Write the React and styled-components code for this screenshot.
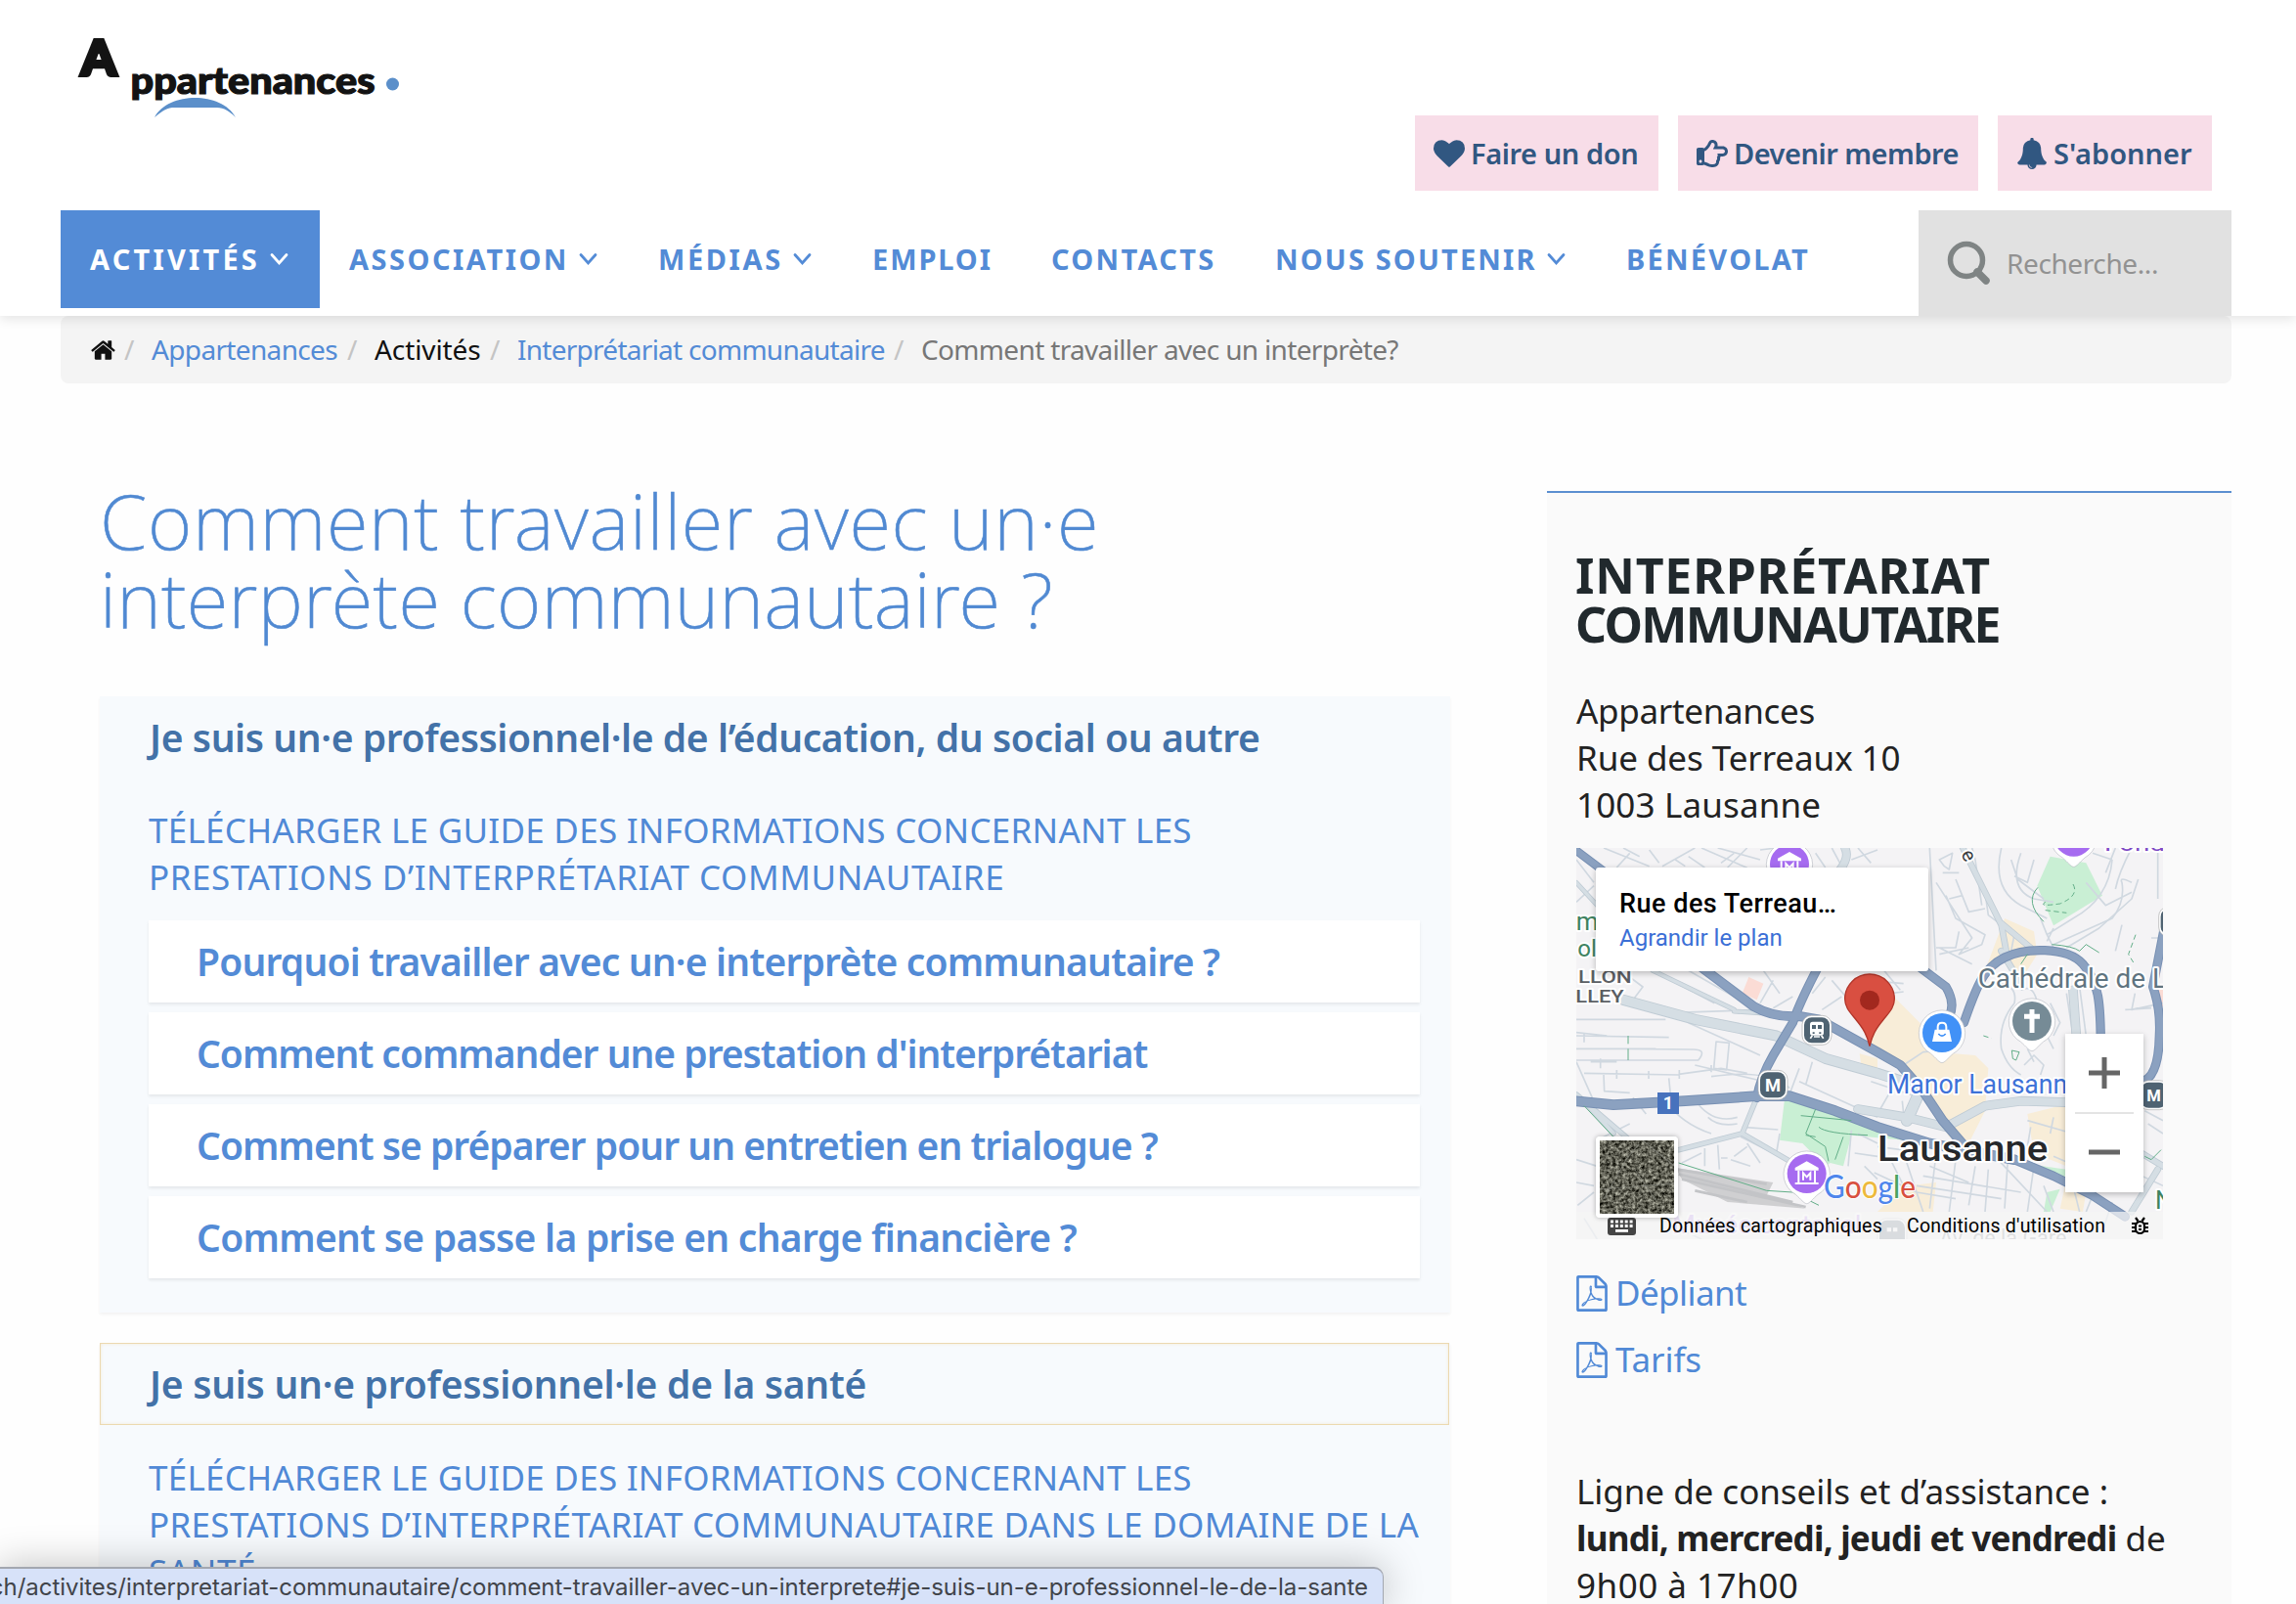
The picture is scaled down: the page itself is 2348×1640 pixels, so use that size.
import React from 'react';
import styled, { createGlobalStyle, css } from 'styled-components';
import { FaRegHandPointRight } from 'react-icons/fa';

const sans = '"Noto Sans", "Open Sans", sans-serif';
const blue = '#538bd6';

const GlobalStyle = createGlobalStyle`
  * { box-sizing: border-box; }
  body { margin: 0; background: #fff; font-family: ${sans}; color: #222; }
  a { text-decoration: none; color: inherit; }
`;

const Viewport = styled.div`
  width: 2348px;
  height: 1640px;
  overflow: hidden;
  position: relative;
  background: #fefefe;
`;

const Track = styled.span`
  letter-spacing: ${p => p.$ls || 0}px;
  white-space: nowrap;
`;

/* ---------- header ---------- */
const Header = styled.header`
  height: 323px;
  padding: 0 66px 0 62px;
  background: #fff;
  box-shadow: 0 2px 12px rgba(0, 0, 0, 0.12);
  position: relative;
  z-index: 1;
`;
const Brand = styled.div`
  height: 118px;
  padding-left: 8px;
  padding-top: 30px;
`;
const Actions = styled.div`
  display: flex;
  justify-content: flex-end;
  gap: 20px;
  height: 77px;
  margin-right: 20px;
`;
const Action = styled.a`
  display: flex;
  align-items: center;
  width: ${p => p.$w}px;
  padding-left: 19px;
  gap: 6px;
  background: #f8dde8;
  color: #315781;
  font-size: 29px;
  font-weight: 600;
  svg { flex: none; }
`;
const NavRow = styled.div`
  display: flex;
  justify-content: space-between;
  margin-top: 20px;
`;
const Nav = styled.nav`
  display: flex;
  height: 100px;
`;
const NavItem = styled.a`
  width: ${p => p.$w}px;
  padding-left: 30px;
  display: flex;
  align-items: center;
  gap: 10px;
  font-size: 29px;
  line-height: 100px;
  font-weight: 700;
  color: ${blue};
  ${p => p.$active && css`
    background: ${blue};
    color: #fff;
  `}
`;
const Search = styled.label`
  width: 320px;
  height: 108px;
  padding-left: 29px;
  display: flex;
  align-items: center;
  gap: 16px;
  background: #e1e1e1;
  color: #929292;
  font-size: 28px;
`;

/* ---------- breadcrumb ---------- */
const Breadcrumb = styled.nav`
  margin: 0 66px 0 62px;
  height: 69px;
  padding-left: 30px;
  display: flex;
  align-items: center;
  background: #f4f4f4;
  border-radius: 8px;
  font-size: 28px;
  line-height: 69px;
`;
const Crumb = styled.span`
  width: ${p => p.$w}px;
  color: ${p => p.$color};
  white-space: nowrap;
`;
const HomeLink = styled.a`
  display: flex;
  width: 35px;
  padding-top: 1px;
  color: #111;
`;
const Slash = styled.span`
  width: 28px;
  color: #c4c4c4;
`;

/* ---------- main ---------- */
const Columns = styled.div`
  display: flex;
  justify-content: space-between;
  padding: 0 66px 0 102px;
`;
const Main = styled.main`
  width: 1381px;
  padding-top: 100px;
`;
const Title = styled.h1`
  margin: 0 0 60px;
  font-size: 78px;
  line-height: 80px;
  font-weight: 200;
  -webkit-text-stroke: 0.6px #5089d2;
  color: #5089d2;
`;
const Line = styled.span`
  display: block;
  white-space: nowrap;
  letter-spacing: ${p => p.$ls || 0}px;
`;
const Panel = styled.section`
  background: #f7fafd;
  padding-bottom: 35px;
  margin-bottom: 31px;
  box-shadow: 0 2px 3px rgba(0, 0, 0, 0.05);
`;
const PanelHead = styled.h2`
  margin: 0 1px 0 0;
  height: 84px;
  line-height: 84px;
  padding-left: 51px;
  font-size: 39px;
  font-weight: 600;
  color: #4372a8;
  ${p => p.$focus && css`
    box-shadow: inset 0 0 0 1px #ecd9b0, inset 0 0 4px #f0e2c4;
  `}
`;
const Guide = styled.a`
  display: block;
  margin: ${p => p.$mt}px 0 20px;
  padding-left: 50px;
  font-size: 35px;
  line-height: 48px;
  color: #5089d6;
`;
const Questions = styled.div`
  display: flex;
  flex-direction: column;
  gap: 10px;
  padding: 0 31px 0 50px;
`;
const Question = styled.a`
  height: 84px;
  line-height: 84px;
  padding-left: 49px;
  background: #fff;
  box-shadow: 0 2px 3px rgba(0, 0, 0, 0.08);
  font-size: 39px;
  font-weight: 600;
  color: ${blue};
`;

/* ---------- sidebar ---------- */
const Aside = styled.aside`
  width: 700px;
  height: 1138px;
  margin-top: 110px;
  padding: 59px 30px 0;
  background: #fafafa;
  border-top: 2px solid #5b8fd0;
`;
const AsideTitle = styled.h2`
  margin: 0 0 40px -1px;
  font-size: 50px;
  line-height: 50px;
  font-weight: 700;
  color: #21292d;
`;
const Copy = styled.div`
  font-size: 35px;
  line-height: 48px;
  color: #222;
  margin-bottom: ${p => p.$mb || 0}px;
`;
const DocLink = styled.a`
  display: flex;
  align-items: center;
  gap: 8px;
  margin-top: 20px;
  font-size: 35px;
  line-height: 48px;
  color: #5089d6;
`;
const Docs = styled.div`
  padding-top: 11px;
  margin-bottom: 87px;
`;

/* ---------- map ---------- */
const MapFrame = styled.div`
  position: relative;
  width: 600px;
  height: 400px;
  overflow: hidden;
  font-family: Roboto, sans-serif;
`;
const MapCard = styled.div`
  position: absolute;
  left: 20px;
  top: 20px;
  width: 340px;
  height: 106px;
  padding: 19px 24px;
  background: #fff;
  border-radius: 3px;
  box-shadow: 0 2px 6px rgba(0, 0, 0, 0.25);
`;
const Place = styled.div`
  font-size: 27px;
  line-height: 36px;
  font-weight: 500;
  letter-spacing: 0.5px;
  color: #000;
`;
const Enlarge = styled.a`
  display: block;
  font-size: 24px;
  line-height: 34px;
  color: #3b6fd6;
`;
const Zoom = styled.div`
  position: absolute;
  left: 500px;
  top: 190px;
  width: 80px;
  height: 162px;
  padding: 0 10px;
  background: #fff;
  box-shadow: 0 2px 6px rgba(0, 0, 0, 0.25);
`;
const ZoomButton = styled.div`
  height: 80px;
  display: flex;
  align-items: center;
  justify-content: center;
  & + & { border-top: 2px solid #e4e4e4; }
`;
const Thumb = styled.div`
  position: absolute;
  left: 20px;
  top: 295px;
  width: 84px;
  height: 83px;
  border: 4px solid #fff;
  border-radius: 4px;
  overflow: hidden;
  box-shadow: 0 0 5px rgba(0, 0, 0, 0.3);
`;
const Credits = styled.div`
  position: absolute;
  left: 0;
  right: 0;
  bottom: 0;
  height: 28px;
  padding: 1px 0 0 32px;
  display: flex;
  align-items: center;
  background: rgba(245, 245, 245, 0.72);
  font-size: 19.5px;
  color: #000;
`;
const Credit = styled.span`
  width: ${p => p.$w}px;
  padding-top: ${p => p.$pt || 0}px;
  display: flex;
  white-space: nowrap;
  letter-spacing: 0.23px;
`;

/* ---------- status bubble ---------- */
const Status = styled.div`
  position: absolute;
  left: -2px;
  bottom: -2px;
  z-index: 3;
  width: 1417px;
  height: 40px;
  padding-right: 15px;
  display: flex;
  justify-content: flex-end;
  background: #d7e2f9;
  border: 1px solid #a3a7b0;
  border-top-width: 2px;
  border-radius: 0 10px 0 0;
  box-shadow: 0 0 40px rgba(0, 0, 0, 0.26);
  font-family: Inter, sans-serif;
  font-size: 24px;
  line-height: 38px;
  letter-spacing: -0.04px;
  color: #41444a;
  white-space: nowrap;
`;

/* ---------- icons ---------- */
const Glyph = ({ size, d, w }) => (
  <svg width={w || size} height={size} viewBox="0 0 1792 1792" fill="currentColor">
    <path d={d} />
  </svg>
);
const heart = 'M896 1664q-26 0-44-18l-624-602q-10-8-27.5-26T145 952.5 77 855 23.5 734 0 596q0-220 127-344t351-124q62 0 126.5 21.5t120 58T820 276t76 68q36-36 76-68t95.5-68.5 120-58T1314 128q224 0 351 124t127 344q0 221-229 450l-623 600q-18 18-44 18z';
const bell = 'M912 1696q0-16-16-16-59 0-101.5-42.5T752 1536q0-16-16-16t-16 16q0 73 51.5 124.5T896 1712q16 0 16-16zm816-288q0 52-38 90t-90 38h-448q0 106-75 181t-181 75-181-75-75-181H192q-52 0-90-38t-38-90q50-42 91-88t85-119.5 74.5-158.5 50-206T384 560q0-152 117-282.5T808 119q-8-19-8-39 0-40 28-68t68-28 68 28 28 68q0 20-8 39 190 28 307 158.5T1408 560q0 139 19.5 260t50 206 74.5 158.5 85 119.5 91 88z';
const home = 'M1472 992v480q0 26-19 45t-45 19h-384v-384H768v384H384q-26 0-45-19t-19-45V992q0-1 .5-3t.5-3l575-474 575 474q1 2 1 6zm223-69l-62 74q-8 9-21 11h-3q-13 0-21-7L896 424l-692 577q-12 8-24 7-13-2-21-11l-62-74q-8-10-7-23.5T101 878l719-599q32-26 76-26t76 26l244 204V288q0-14 9-23t23-9h192q14 0 23 9t9 23v408l219 182q10 8 11 21.5t-7 23.5z';
const pdf = 'M1596 380q28 28 48 76t20 88v1152q0 40-28 68t-68 28H224q-40 0-68-28t-28-68V96q0-40 28-68t68-28h896q40 0 88 20t76 48zm-444-244v376h376q-10-29-22-41l-313-313q-12-12-41-22zm384 1528V640h-416q-40 0-68-28t-28-68V128H256v1536h1280zm-514-593q33 26 84 56 59-7 117-7 147 0 177 49 16 22 2 52 0 1-1 2l-2 2v1q-6 38-71 38-48 0-115-20t-130-53q-221 24-392 83-153 262-242 262-15 0-28-7l-24-12q-1-1-6-5-10-10-6-36 9-40 56-91.5t132-96.5q14-9 23 6 2 2 2 4 52-85 107-197 68-136 104-262-24-82-30.5-159.5T785 552q11-40 42-40h22q23 0 35 15 18 21 9 68-2 6-4 8 1 3 1 8v30q-2 123-14 192 55 164 146 238zm-576 411q52-24 137-158-51 40-87.5 84t-49.5 74zm398-920q-15 42-2 132 1-7 7-44 0-3 7-43 1-4 4-8-1-1-1-2-1-2-1-3-1-22-13-36 0 1-1 2v2zm-124 661q135-54 284-81-2-1-13-9.5t-16-13.5q-76-67-127-176-27 86-83 197-30 56-45 83zm646-16q-24-24-140-24 76 28 124 28 14 0 18-1 0-1-2-3z';

const Chevron = () => (
  <svg width="19" height="14" viewBox="0 0 19 14" fill="none" stroke="currentColor" strokeWidth="2.8" strokeLinecap="round">
    <path d="M2 2.5 9.5 11 17 2.5" />
  </svg>
);
const Magnifier = () => (
  <svg width="45" height="46" viewBox="0 0 45 46" fill="none" stroke="#7f8484">
    <circle cx="20" cy="20" r="16.5" strokeWidth="5.5" />
    <path d="M31 32 40 41" strokeWidth="7.5" strokeLinecap="round" />
  </svg>
);
const PdfIcon = () => (
  <svg width="32" height="37" viewBox="128 0 1536 1792" fill="currentColor"><path d={pdf} /></svg>
);

const Logo = () => (
  <svg width="350" height="96" viewBox="70 30 350 96" overflow="visible">
    <g fill="#131313" stroke="#131313" fontFamily="Lato, sans-serif" fontWeight="900">
      <text x="83" y="77" fontSize="50" strokeWidth="4" textLength="36" lengthAdjust="spacingAndGlyphs">A</text>
      <text x="133.500" y="96" fontSize="37" strokeWidth="1.200" textLength="250" lengthAdjust="spacingAndGlyphs">ppartenances</text>
    </g>
    <path d="M158 120C172 94 226 93 241 120 235 114 229 110 222 110H176C169 111 164 115 158 120Z" fill="#5b8fca" />
    <circle cx="401.500" cy="86" r="6.500" fill="#5b8fca" />
  </svg>
);

/* ---------- map drawing, on a 3x grid whose origin is (36, 24) ---------- */
const streets = [
  'M36 60 90 130M36 190 90 140M120 24 260 80M180 24 230 50M300 80 400 24M340 60 370 80M420 24 560 85M470 24 600 60M560 24 500 84M600 30 650 24M820 24 850 80M880 60 960 30M900 24 940 70',
  'M160 84 200 40M260 30 290 70M380 50 430 84M480 70 520 40M770 40 800 84',
  'M36 550H310M36 600 320 605M36 640 280 640M36 675H410Q440 640 390 642L200 640M60 590V620M110 670V700M160 705V732M60 715 350 720M258 708V732M352 705V732M350 718 480 700 560 715M450 690V712M36 590 130 600M80 680H160M450 725Q620 700 690 760M465 618 505 622 497 705 458 700ZM36 680 85 790M120 720 122 770 200 775M320 730 325 780',
  'M310 800Q360 870 450 900M400 690 590 735M380 560 600 660M410 810Q460 870 530 850M440 850Q470 880 530 870M200 420 240 450 210 490M270 400 460 500M380 400 520 480M600 500 640 430M610 400 660 470M800 420 760 470M820 430 880 500M790 520 850 480M320 530 600 520M700 480 640 515M930 420 1000 470 1040 465M980 400 1030 460',
  'M360 990 420 960M430 945V1000M470 935 475 1010M480 975H500M540 910 720 1000M545 880 655 888M520 970 560 940M560 930 600 990M590 930 640 960M660 900 650 960M510 980 570 1000',
  'M200 870 100 920M250 840 210 790M36 980 100 1000M36 1050 90 1060M40 1120 90 1080M60 1160 100 1224M350 1190 420 1224M720 700 690 780M720 740 960 850M760 680 740 750M880 890 870 1000M900 900 960 930M890 960 960 970M920 1000 960 1040',
  'M1120 24 1140 400M1160 100H1210M1150 60 1190 40 1180 90 1165 80ZM1140 130 1250 300 1210 350 1280 320 1290 290 1200 240 1170 170M1180 180 1220 170M1200 120 1240 220 1290 210M1150 330 1250 380M1250 24 1260 60 1280 200M1290 160 1300 230 1380 290 1370 340M1140 330H1200L1210 280M1150 350 1240 330M1340 24Q1310 150 1400 200L1480 240M1400 40Q1360 150 1440 180L1500 190M1370 60 1390 120 1470 180M1380 110 1420 130 1440 60M1460 240 1480 290 1500 330M1540 330 1640 270 1740 180 1760 120',
  'M1480 310 1500 270M1600 130 1660 200 1740 160M1620 40 1680 60M1680 60Q1670 180 1560 240L1480 290M1690 24 1660 100M1740 130Q1700 110 1710 130 1720 190 1680 240L1500 320M1740 24Q1700 100 1690 150M1820 24V180M1710 260 1690 340M1800 300H1836M1720 520 1800 515M1750 470 1740 520 1836 500',
  'M1340 440Q1390 450 1380 500 1330 560 1340 640 1360 700 1400 720M1400 460Q1440 440 1450 500M1480 600 1500 640M1410 690 1440 660 1470 690 1460 720M1500 600 1520 560 1490 500M1580 450 1600 600M1540 470 1560 600M1420 640 1440 680M1040 690 1100 650 1200 640M930 430 1040 440M940 740 1120 800M1036 800 1040 840M1000 770 960 840',
  'M950 1020 1080 1080 1200 1100M1000 980 1040 1060M1040 960 1100 1140M1140 960 1120 1130M1200 980 1180 1140M1260 1000 1240 1120M1300 1010 1290 1140M1080 1060 1340 1100M1100 1030 1400 1080M1120 1000 1240 1050M1440 1000 1420 1140M1360 980 1350 1130M1470 1060 1500 1140M1560 1060 1580 1140M1620 1090 1600 1140M1680 1110 1650 1200M1420 860 1560 900M1430 880 1420 940M1500 850 1490 900M960 940 1110 960M1330 980 1480 1140M1780 830 1836 860M1790 870 1836 900M1640 970 1836 1060M1500 970 1640 1030',
];
const avenues = [
  ['M180 490 400 550 650 600 800 670 960 715 1100 760', 30],
  ['M520 525 600 530', 12],
  ['M170 480 240 510M270 400 520 520', 12],
  ['M36 780 200 920M60 800 150 900', 14],
  ['M590 790 545 900 350 950M545 900 700 990', 14],
  ['M1220 20 1340 260 1355 340M1340 255 1430 330', 17],
  ['M900 825 1050 850 1170 880 1290 815 1400 800 1560 805', 26],
  ['M1050 860 1090 770', 34],
  ['M1560 460 1570 600', 26],
  ['M860 24Q880 60 820 120', 24],
  ['M36 130 100 200', 12],
  ['M1770 960 1836 1000M1820 1010 1740 1140', 18],
  ['M1340 340 1400 440', 18],
];
const highways = [
  ['M20 20 120 95', 24],
  ['M420 390 580 510Q640 545 720 540L780 550 960 650 1030 690 1100 770 1160 860 1220 930', 28],
  ['M775 395Q720 500 700 560L640 660Q600 730 590 790', 26],
  ['M30 800 150 812 370 800 590 785 690 785 830 830 960 880 1120 930 1380 980', 30],
  ['M1380 980 1500 1030 1620 1090 1720 1155', 26],
  ['M1090 390 1170 450Q1200 500 1180 540', 26],
  ['M1225 560C1270 430 1290 390 1350 360S1540 325 1590 380 1645 500 1645 640', 26],
  ['M1840 270 1805 450Q1830 520 1825 600 1822 740 1760 742', 26],
];

const Pin = ({ x, y, fill, children }) => (
  <g transform={`translate(${x} ${y})`}>
    <path d="M0 92C-8 92-18 78-34 64A71 71 0 1 1 34 64C18 78 8 92 0 92Z" fill="#fff" stroke="#b9bcc4" strokeWidth="2" />
    <circle r="60" fill={fill} />
    {children}
  </g>
);
const Museum = () => (
  <g fill="#fff">
    <path d="M0-38 36-18V-10H-36V-18Z" />
    <path d="M-25-10V28M25-10V28M-36 30H36" stroke="#fff" strokeWidth="6" />
    <path d="M-11 20V-2L0 10 11-2V20" fill="none" stroke="#fff" strokeWidth="6" />
  </g>
);
const Station = ({ x, y, children }) => (
  <g transform={`translate(${x} ${y})`}>
    <rect x="-45" y="-45" width="90" height="90" rx="28" fill="#fff" stroke="#aaa" strokeWidth="2" />
    <rect x="-39" y="-39" width="78" height="78" rx="23" fill="#4f6372" />
    {children}
  </g>
);
const Label = ({ x, y, size, fill, w, weight = 400, halo = 12, children }) => (
  <text x={x} y={y} fontSize={size} fill={fill} fontWeight={weight} stroke="#fff" strokeWidth={halo}
    strokeLinejoin="round" paintOrder="stroke" textLength={w} lengthAdjust="spacingAndGlyphs">{children}</text>
);

const MapCanvas = () => (
  <svg width="600" height="400" viewBox="36 24 1800 1200" fontFamily="Roboto, sans-serif">
    <rect x="36" y="24" width="1800" height="1200" fill="#f4f3f5" />
    <g fill="#f8edd8">
      <path d="M940 500 1010 480 1090 560 1140 650 1260 660 1300 700 1290 830 1240 930 1180 910 1100 780 1020 690 930 640Z" />
      <path d="M1290 400 1350 240 1440 280 1450 350 1400 430 1350 360 1290 410Z" />
      <path d="M1420 840 1540 810 1540 1000 1440 960Z" />
      <path d="M905 655 960 670V710L910 690Z" />
      <path d="M1060 1060 1140 1050 1130 1140 960 1140 1000 1100ZM1540 1040 1600 1080 1590 1140 1520 1130Z" />
    </g>
    <path d="M565 420 610 440 590 490 545 470ZM1810 450H1836V510L1820 520Z" fill="#fbdcd5" />
    <g fill="#c9efd4">
      <path d="M675 795 840 840 1100 920 1090 925 880 905 855 1000 815 990 800 1000 730 930 660 920Z" />
      <path d="M1490 50 1600 70 1650 170 1500 262 1450 140Z" />
      <path d="M1400 990 1540 1010 1530 1050ZM1480 1080 1520 1070 1490 1140H1470ZM900 870 1000 900 960 910Z" />
    </g>
    <path d="M340 1005 640 1050 620 1090 740 1130 500 1110 360 1040Z" fill="#cfcfd1" />
    <path d="M345 1010 620 1055M350 1025 700 1110M360 1040 740 1125M400 1075 560 1110" stroke="#c3c4c7" strokeWidth="8" fill="none" />
    <g fill="none" stroke="#d0d8e0" strokeWidth="5" strokeLinejoin="round">
      {streets.map((d, i) => <path key={i} d={d} />)}
    </g>
    <g fill="none" strokeLinejoin="round" strokeLinecap="round">
      {avenues.map(([d, w], i) => <path key={i} d={d} stroke="#bfcbd4" strokeWidth={w + 3} />)}
      {avenues.map(([d, w], i) => <path key={i} d={d} stroke="#d5dee4" strokeWidth={w - 2} />)}
      {highways.map(([d, w], i) => <path key={i} d={d} stroke="#7890b3" strokeWidth={w + 2} />)}
      {highways.map(([d, w], i) => <path key={i} d={d} stroke="#8ba1c0" strokeWidth={w - 4} />)}
    </g>
    <g fill="none" stroke="#62ae88" strokeWidth="3">
      <path d="M725 845 880 860M770 825 740 900 800 940 810 985M740 905 770 910M780 880Q800 900 930 905M855 910 830 980M195 600V625M195 640V675M60 815 150 910M350 990 620 1075 700 1080 780 1120" />
      <path d="M1452 145Q1410 190 1470 250M1495 320Q1560 325 1580 340L1600 320 1640 345M1420 350 1400 380M1372 645 1395 650 1385 675 1375 670ZM1780 970 1800 980 1830 950" />
      <path d="M1560 135Q1580 170 1520 195 1450 205 1475 190M1475 215 1540 223M1752 290 1730 350 1745 375M1285 600 1310 608" strokeDasharray="16 10" />
    </g>

    <Label x="-8" y="275" size="78" fill="#3f8361">um</Label>
    <Label x="40" y="357" size="72" fill="#3f8361">ol</Label>
    <Label x="42" y="437" size="57" fill="#5b5e63" weight={500} w="164">LLON</Label>
    <Label x="34" y="498" size="57" fill="#5b5e63" weight={500} w="148">LLEY</Label>
    <g transform="rotate(62 1225 40)"><Label x="1222" y="50" size="60" fill="#3a3d42">e</Label></g>
    <Label x="1656" y="34" size="68" fill="#7d49c4" w="186">Fond</Label>
    <Label x="1268" y="452" size="81" fill="#5f7480" w="580">Cathédrale de L</Label>
    <Label x="990" y="776" size="81" fill="#3d72d8" w="595">Manor Lausanne</Label>
    <Label x="960" y="983" size="112" fill="#26282b" weight={500} w="523">Lausanne</Label>
    <Label x="1812" y="1130" size="76" fill="#3f8361">N</Label>
    <Label x="330" y="1206" size="80" fill="#c9aaf0" w="580">Musée cantonal</Label>
    <Label x="1150" y="1245" size="72" fill="#a4a9ae" w="390">Av. de la Gare</Label>

    <g transform="translate(318 807)">
      <rect x="-33" y="-33" width="66" height="66" fill="#4772bd" />
      <text y="19" textAnchor="middle" fontSize="54" fontWeight="700" fill="#fff">1</text>
    </g>
    <Station x={774} y={583}>
      <rect x="-21" y="-26" width="42" height="42" rx="8" fill="#fff" />
      <path d="M-15-16H-3V-4H-15ZM3-16H15V-4H3ZM-13 6H-7V11H-13ZM7 6H13V11H7Z" fill="#4f6372" />
      <path d="M-14 16-20 25M14 16 20 25M-9 20H9" stroke="#fff" strokeWidth="5" />
    </Station>
    <Station x={639} y={751}><text y="19" textAnchor="middle" fontSize="55" fontWeight="700" fill="#fff">M</text></Station>
    <Station x={1808} y={782}><text y="18" textAnchor="middle" fontSize="50" fontWeight="700" fill="#fff">M</text></Station>
    <Station x={1868} y={250} />
    <g opacity="0.6"><Station x={1005} y={1205}><path d="M-16-16H-3V-4H-16ZM3-16H16V-4H3Z" fill="#fff" /></Station></g>

    <Pin x={690} y={74} fill="#a66bf0"><Museum /></Pin>
    <Pin x={1562} y={-10} fill="#a66bf0" />
    <Pin x={743} y={1023} fill="#a66bf0"><Museum /></Pin>
    <Pin x={1158} y={591} fill="#4191f7">
      <path d="M-22-10H22L30 27H-30Z" fill="#fff" />
      <path d="M-13-8V-18Q-13-31 0-31T13-18V-8" fill="none" stroke="#fff" strokeWidth="6" />
      <path d="M-11 3Q0 16 11 3" fill="none" stroke="#4191f7" strokeWidth="5" />
    </Pin>
    <Pin x={1434} y={555} fill="#768b96"><path d="M0-36V36M-24-14H24" stroke="#fff" strokeWidth="15" /></Pin>

    <path d="M936 632C928 598 918 580 895 552 874 526 860 512 860 487A76 76 0 0 1 1012 487C1012 512 998 526 977 552 954 580 944 598 936 632Z" fill="#d94f41" stroke="#b13529" strokeWidth="4" />
    <circle cx="936" cy="491" r="30" fill="#a2281e" />

    <text x="795" y="1098" fontSize="96" fontFamily="Lato, sans-serif" fontWeight="500" stroke="#fff" strokeWidth="6" paintOrder="stroke" textLength="282" lengthAdjust="spacingAndGlyphs">
      <tspan fill="#4f86ec">G</tspan><tspan fill="#d8503f">o</tspan><tspan fill="#edb93c">o</tspan><tspan fill="#4f86ec">g</tspan><tspan fill="#4aa35f">l</tspan><tspan fill="#d8503f">e</tspan>
    </text>
  </svg>
);

const Satellite = () => (
  <svg width="76" height="76" viewBox="0 0 76 76">
    <defs>
      <filter id="terrain" x="0" y="0" width="100%" height="100%" colorInterpolationFilters="sRGB">
        <feTurbulence type="fractalNoise" baseFrequency="0.3" numOctaves="4" seed="8" />
        <feColorMatrix values="1.1 0 0 0 -0.17  1.1 0 0 0 -0.17  1.05 0 0 0 -0.19  0 0 0 0 1" />
      </filter>
    </defs>
    <rect width="76" height="76" filter="url(#terrain)" />
    <path d="M4 60 28 18 40 4M36 30 58 62M0 50 76 44M44 0 76 26" stroke="#8b8c83" strokeWidth="1.2" fill="none" opacity="0.6" />
  </svg>
);

const Keyboard = () => (
  <svg width="29" height="18" viewBox="0 0 29 18">
    <rect width="29" height="18" rx="3" fill="#444" />
    <g fill="#fff">
      {[0, 1].map(r => [0, 1, 2, 3, 4].map(c => <rect key={`${r}${c}`} x={3 + c * 4.9} y={2.5 + r * 4.5} width="3" height="3" />))}
      <rect x="8" y="12" width="13" height="2.8" />
    </g>
  </svg>
);
const Bug = () => (
  <svg width="17" height="20" viewBox="0 0 17 20" fill="none" stroke="#000" strokeWidth="2.2">
    <rect x="4" y="5" width="9" height="12" rx="4.5" />
    <path d="M0 7H4M0 11H4M0 15H4M13 7H17M13 11H17M13 15H17M4 1 6.500 4.500M13 1 10.500 4.500M7 9.500H10M7 13H10" />
  </svg>
);

const navItems = [
  ['ACTIVITÉS', 265, 3.2, true, true],
  ['ASSOCIATION', 316, 2.5, true],
  ['MÉDIAS', 219, 2.6, true],
  ['EMPLOI', 183, 1.9],
  ['CONTACTS', 229, 2.3],
  ['NOUS SOUTENIR', 359, 2.15, true],
  ['BÉNÉVOLAT', 249, 2.25],
];
const questions = [
  ['Pourquoi travailler avec un·e interprète communautaire ?', -0.82],
  ["Comment commander une prestation d'interprétariat", -1.02],
  ['Comment se préparer pour un entretien en trialogue ?', -0.98],
  ['Comment se passe la prise en charge financière ?', -0.72],
];

export default function App() {
  return (
    <Viewport>
      <GlobalStyle />
      <Header>
        <Brand><Logo /></Brand>
        <Actions>
          <Action $w={249}><Glyph size={32} d={heart} /><Track $ls={-0.43}>Faire un don</Track></Action>
          <Action $w={307}><FaRegHandPointRight size={32} /><Track $ls={-0.5}>Devenir membre</Track></Action>
          <Action $w={219}><Glyph size={32} d={bell} /><Track $ls={0}>S'abonner</Track></Action>
        </Actions>
        <NavRow>
          <Nav>
            {navItems.map(([label, w, ls, menu, active]) => (
              <NavItem key={label} $w={w} $active={active}>
                <Track $ls={ls}>{label}</Track>
                {menu && <Chevron />}
              </NavItem>
            ))}
          </Nav>
          <Search><Magnifier /><Track $ls={-0.4}>Recherche...</Track></Search>
        </NavRow>
      </Header>

      <Breadcrumb>
        <HomeLink><Glyph size={28} d={home} w={27} /></HomeLink>
        <Slash>/</Slash>
        <Crumb $w={200} $color={blue}><Track $ls={-0.65}>Appartenances</Track></Crumb>
        <Slash>/</Slash>
        <Crumb $w={118} $color="#111"><Track $ls={-0.1}>Activités</Track></Crumb>
        <Slash>/</Slash>
        <Crumb $w={385} $color={blue}><Track $ls={-0.73}>Interprétariat communautaire</Track></Crumb>
        <Slash>/</Slash>
        <Crumb $color="#777"><Track $ls={-0.66}>Comment travailler avec un interprète?</Track></Crumb>
      </Breadcrumb>

      <Columns>
        <Main>
          <Title>
            <Line $ls={0.7}>Comment travailler avec un·e</Line>
            <Line $ls={0.3}>interprète communautaire ?</Line>
          </Title>
          <Panel>
            <PanelHead><Track $ls={-0.4}>Je suis un·e professionnel·le de l’éducation, du social ou autre</Track></PanelHead>
            <Guide $mt={29}>
              <Line $ls={0.27}>TÉLÉCHARGER LE GUIDE DES INFORMATIONS CONCERNANT LES</Line>
              <Line $ls={0.56}>PRESTATIONS D’INTERPRÉTARIAT COMMUNAUTAIRE</Line>
            </Guide>
            <Questions>
              {questions.map(([q, ls]) => <Question key={q}><Track $ls={ls}>{q}</Track></Question>)}
            </Questions>
          </Panel>
          <Panel>
            <PanelHead $focus><Track $ls={-0.26}>Je suis un·e professionnel·le de la santé</Track></PanelHead>
            <Guide $mt={30}>
              <Line $ls={0.27}>TÉLÉCHARGER LE GUIDE DES INFORMATIONS CONCERNANT LES</Line>
              <Line $ls={0.32}>PRESTATIONS D’INTERPRÉTARIAT COMMUNAUTAIRE DANS LE DOMAINE DE LA</Line>
              <Line $ls={0.6}>SANTÉ</Line>
            </Guide>
          </Panel>
        </Main>

        <Aside>
          <AsideTitle>
            <Line $ls={0.8}>INTERPRÉTARIAT</Line>
            <Line $ls={-1.7}>COMMUNAUTAIRE</Line>
          </AsideTitle>
          <Copy $mb={20}>
            <Line $ls={-0.32}>Appartenances</Line>
            <Line $ls={-0.08}>Rue des Terreaux 10</Line>
            <Line $ls={0.15}>1003 Lausanne</Line>
          </Copy>
          <MapFrame>
            <MapCanvas />
            <MapCard>
              <Place>Rue des Terreau…</Place>
              <Enlarge>Agrandir le plan</Enlarge>
            </MapCard>
            <Zoom>
              <ZoomButton><svg width="34" height="34"><path d="M17 1V33M1 17H33" stroke="#666" strokeWidth="5" /></svg></ZoomButton>
              <ZoomButton><svg width="34" height="34"><path d="M1 17H33" stroke="#666" strokeWidth="5" /></svg></ZoomButton>
            </Zoom>
            <Credits>
              <Credit $w={53} $pt={1}><Keyboard /></Credit>
              <Credit $w={253}>Données cartographiques</Credit>
              <Credit $w={230}>Conditions d'utilisation</Credit>
              <Bug />
            </Credits>
            <Thumb><Satellite /></Thumb>
          </MapFrame>
          <Docs>
            <DocLink><PdfIcon /><Track $ls={-0.6}>Dépliant</Track></DocLink>
            <DocLink><PdfIcon /><Track $ls={-0.1}>Tarifs</Track></DocLink>
          </Docs>
          <Copy>
            <Line $ls={-0.04}>Ligne de conseils et d’assistance :</Line>
            <Line><Track as="b" $ls={-0.76}>lundi, mercredi, jeudi et vendredi</Track> de</Line>
            <Line $ls={0.5}>9h00 à 17h00</Line>
          </Copy>
        </Aside>
      </Columns>

      <Status>ch/activites/interpretariat-communautaire/comment-travailler-avec-un-interprete#je-suis-un-e-professionnel-le-de-la-sante</Status>
    </Viewport>
  );
}
